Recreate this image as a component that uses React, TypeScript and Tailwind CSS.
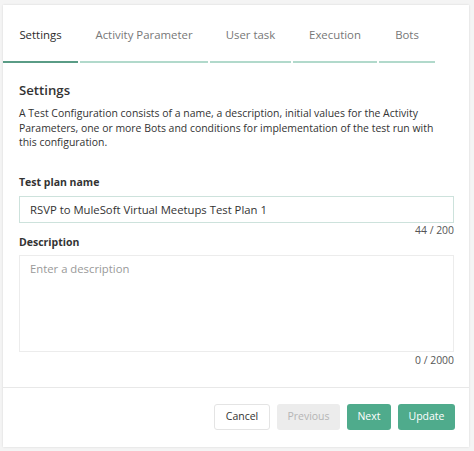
import React from 'react'

const tabs = [
  { label: 'Settings', w: 'w-[75px]' },
  { label: 'Activity Parameter', w: 'w-[128px]' },
  { label: 'User task', w: 'w-[81px]' },
  { label: 'Execution', w: 'w-[84px]' },
  { label: 'Bots', w: 'w-[56px]' },
]

export default function App() {
  return (
    <div className="min-h-[451px] w-[474px] bg-[#f4f4f4] pt-[5px] pl-[3px] font-['Open_Sans',sans-serif] text-[#333]">
      <div className="w-[466px] bg-white shadow-[0_0_2px_rgba(0,0,0,0.12)]">
        {/* tabs */}
        <div className="flex gap-[2px]">
          {tabs.map((t, i) => (
            <div
              key={t.label}
              className={`${t.w} whitespace-nowrap pt-[22px] pb-[18px] text-center text-[11.4px] leading-[16px] border-b-2 ${
                i === 0 ? 'border-[#5a9c86] text-[#2b2b2b]' : 'border-[#b1d9cb] text-[#777]'
              }`}
            >
              {t.label}
            </div>
          ))}
        </div>

        <div className="px-4 pt-[18px]">
          <h2 className="text-[13.2px] leading-[19px] font-semibold text-[#333]">Settings</h2>
          <p className="mt-[6px] w-[428px] text-[10.45px] leading-[14.7px] text-[#333]">
            A Test Configuration consists of a name, a description, initial values for the Activity
            Parameters, one or more Bots and conditions for implementation of the test run with
            this configuration.
          </p>

          <label className="mt-[26px] block text-[10.5px] leading-[12px] font-bold text-[#333]">
            Test plan name
          </label>
          <div className="mt-[8px] h-[27px] w-[435px] border border-[#cde2dc] px-[10px] text-[11.3px] leading-[25px] text-[#333]">
            RSVP to MuleSoft Virtual Meetups Test Plan 1
          </div>
          <div className="mt-[1px] w-[435px] text-right text-[10.4px] leading-[12px] text-[#555]">44 / 200</div>

          <label className="block text-[10.5px] leading-[12px] font-bold text-[#333]">
            Description
          </label>
          <div className="mt-[7px] h-[97px] w-[435px] border border-[#ececec] px-[10px] pt-[5px] text-[11.3px] leading-[16px] text-[#999]">
            Enter a description
          </div>
          <div className="mt-[2px] w-[435px] text-right text-[10.4px] leading-[12px] text-[#555]">0 / 2000</div>
        </div>

        <div className="mt-[21px] flex justify-end gap-[7px] border-t border-[#e8e8e8] pt-4 pb-[17px] pr-[14px]">
          <button className="h-[26px] w-[56px] rounded-[3px] border border-[#e4e4e4] bg-white text-[10.5px] text-[#333]">
            Cancel
          </button>
          <button className="h-[26px] w-[63px] rounded-[3px] bg-[#ececec] text-[10.5px] text-[#b5b5b5]">
            Previous
          </button>
          <button className="h-[26px] w-[44px] rounded-[3px] bg-[#4fab8c] text-[10.5px] text-white">
            Next
          </button>
          <button className="h-[26px] w-[57px] rounded-[3px] bg-[#4fab8c] text-[10.5px] text-white">
            Update
          </button>
        </div>
      </div>
    </div>
  )
}
